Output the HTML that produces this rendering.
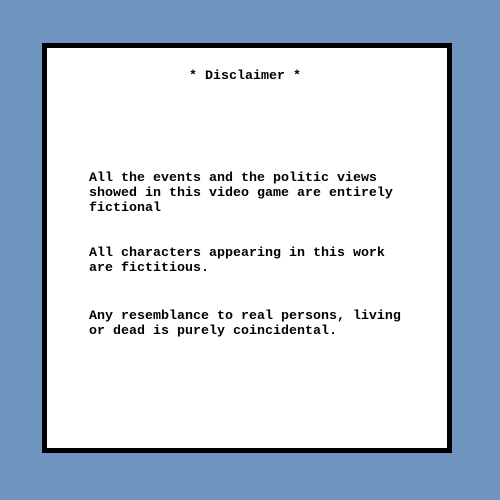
<!DOCTYPE html>
<html><head><style>
html,body{margin:0;padding:0;width:500px;height:500px;background:#7094c0;overflow:hidden}
.box{position:absolute;left:42px;top:43px;width:400px;height:400px;border:5px solid #000;background:#fff}
.t{position:absolute;font-family:"Liberation Mono","DejaVu Sans Mono",monospace;font-weight:bold;font-size:13.33px;line-height:15px;color:#000;white-space:pre;margin:0}
</style></head><body>
<div class="box"></div>
<div class="t" style="left:0;width:490px;text-align:center;top:69px">* Disclaimer *</div>
<div class="t" style="left:89px;top:171px">All the events and the politic views
showed in this video game are entirely
fictional</div>
<div class="t" style="left:89px;top:246px">All characters appearing in this work
are fictitious.</div>
<div class="t" style="left:89px;top:309px">Any resemblance to real persons, living
or dead is purely coincidental.</div>
</body></html>
